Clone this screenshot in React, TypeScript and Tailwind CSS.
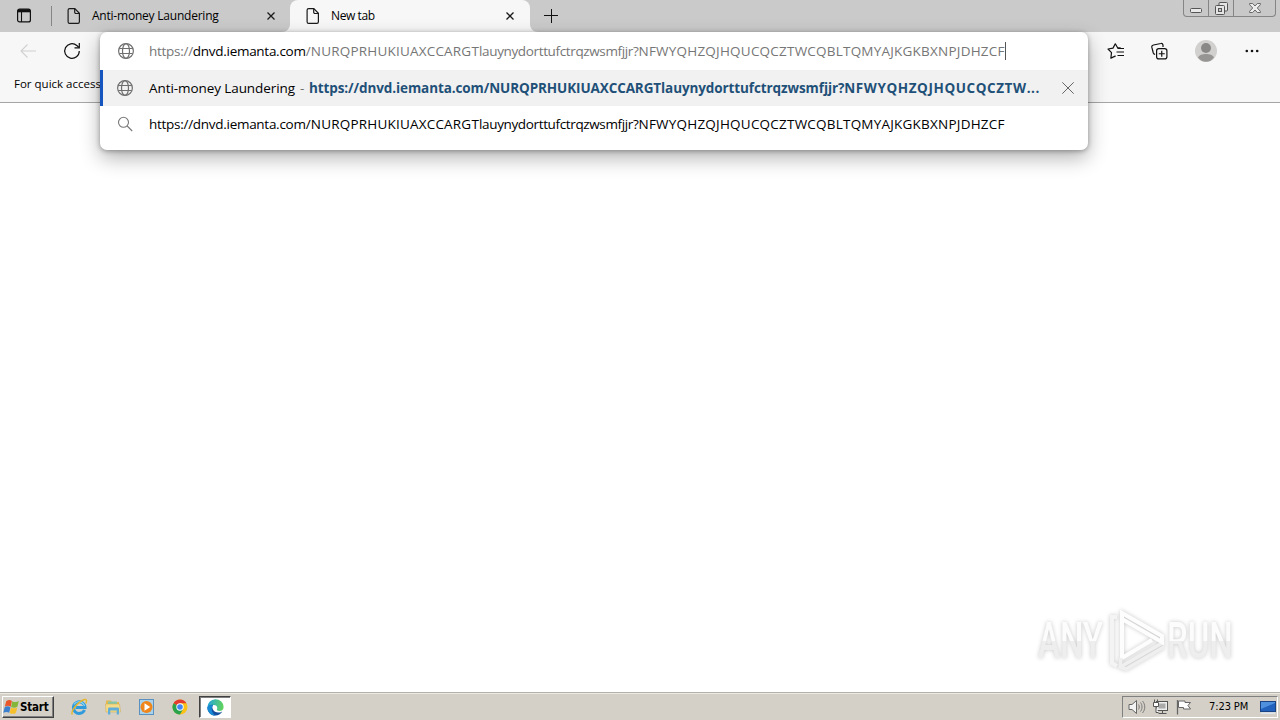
import React from "react";

interface IconProps {
  className?: string;
}

function PageIcon({ className }: IconProps) {
  return (
    <svg className={className} width="14" height="16" viewBox="0 0 14 16" fill="none" stroke="#1b1b1b" strokeWidth="1.2">
      <path d="M2.6.7h5.2l4.6 4.6v8.4c0 .9-.6 1.6-1.5 1.6H2.6c-.9 0-1.5-.7-1.5-1.6V2.3c0-.9.6-1.6 1.5-1.6z" />
      <path d="M7.7.8v3.4c0 .8.5 1.3 1.3 1.3h3.3" />
    </svg>
  );
}

function GlobeIcon({ className }: IconProps) {
  return (
    <svg className={className} width="16" height="16" viewBox="0 0 16 16" fill="none" stroke="#707070" strokeWidth="1.2">
      <circle cx="8" cy="8" r="7.4" />
      <ellipse cx="8" cy="8" rx="3.5" ry="7.4" />
      <path d="M1.3 5.5h13.4M1.3 10.5h13.4" />
    </svg>
  );
}

function CloseIcon({ className }: IconProps) {
  return (
    <svg className={className} width="8" height="8" viewBox="0 0 8 8" stroke="#1b1b1b" strokeWidth="1.3">
      <path d="M.5.5l7 7M7.5.5l-7 7" />
    </svg>
  );
}

function WindowButtons() {
  return (
    <div className="flex h-[17px] w-[93px] rounded-b-[4px] border border-t-0 border-[#858585] bg-[#c8c8c8]">
      <div className="flex w-[25px] justify-center border-r border-[#858585] pt-[8px]">
        <svg width="12" height="5" viewBox="0 0 12 5">
          <rect x=".5" y=".5" width="11" height="4" rx="1" fill="#e8e8e8" stroke="#555" />
        </svg>
      </div>
      <div className="flex w-[25px] justify-center border-r border-[#858585] pt-[2px]">
        <svg width="13" height="13" viewBox="0 0 13 13" fill="#e4e4e4" stroke="#555">
          <rect x="4" y=".5" width="8.5" height="8.5" rx="1" />
          <rect x=".5" y="3.5" width="9" height="9" rx="1" />
          <rect x="3.5" y="6.5" width="3" height="3" fill="#c8c8c8" />
        </svg>
      </div>
      <div className="flex flex-1 justify-center pt-[3px]">
        <svg width="12" height="10" viewBox="0 0 12 10">
          <path
            d="M.6.5h3L6 3l2.4-2.5h3v1.2L8.3 5l3.1 3.3v1.2h-3L6 7 3.6 9.5h-3V8.3L3.7 5 .6 1.7z"
            fill="#ececec"
            stroke="#5c5c5c"
            strokeWidth=".9"
          />
        </svg>
      </div>
    </div>
  );
}

function TabStrip() {
  return (
    <div className="flex h-8 bg-[#cacaca]">
      <div className="flex w-[290px] pt-2">
        <svg className="ml-[17px]" width="14" height="15" viewBox="0 0 14 15" fill="none" stroke="#111">
          <rect x=".6" y="1.1" width="12.8" height="12.8" rx="2" strokeWidth="1.2" />
          <path d="M1 2.8h12" strokeWidth="3" />
          <path d="M4.5 4v10" strokeWidth="1.1" />
        </svg>
        <div className="ml-5 -mt-[2px] h-[20px] w-px bg-[#858585]" />
        <PageIcon className="ml-[15px]" />
        <span className="ml-[11px] w-[128px] whitespace-nowrap text-[12px] leading-4 tracking-[-0.22px]">
          Anti-money Laundering
        </span>
        <CloseIcon className="ml-[47px] mt-[4px]" />
      </div>
      <div className="relative flex w-[240px] rounded-t-[8px] bg-[#f7f7f7] pt-2">
        <svg className="absolute -left-2 bottom-0" width="8" height="8" viewBox="0 0 8 8" fill="#f7f7f7">
          <path d="M8 0v8H0c4.5 0 8-3.5 8-8z" />
        </svg>
        <svg className="absolute -right-2 bottom-0" width="8" height="8" viewBox="0 0 8 8" fill="#f7f7f7">
          <path d="M0 0v8h8C3.5 8 0 4.5 0 0z" />
        </svg>
        <PageIcon className="ml-4" />
        <span className="ml-[11px] w-[100px] whitespace-nowrap text-[12px] leading-4 tracking-[-0.4px]">New tab</span>
        <CloseIcon className="ml-[75px] mt-[4px]" />
      </div>
      <svg className="ml-[14px] mt-[9px]" width="14" height="14" viewBox="0 0 14 14" stroke="#111" strokeWidth="1">
        <path d="M7.5 0v14M0 6.5h14" />
      </svg>
      <div className="ml-auto mr-[4px]">
        <WindowButtons />
      </div>
    </div>
  );
}

function Toolbar() {
  return (
    <div className="h-[71px] border-b border-[#a6a6a6] bg-[#f7f7f7]">
      <div className="flex h-[38px] items-center">
        <svg className="ml-5" width="16" height="14" viewBox="0 0 16 14" fill="none" stroke="#d0d0d0" strokeWidth="1.1">
          <path d="M16 7H1M7.5.5L1 7l6.5 6.5" />
        </svg>
        <svg className="ml-[27px]" width="18" height="18" viewBox="0 0 18 18" fill="none" stroke="#111" strokeWidth="1.2">
          <path d="M16.3 9a7.3 7.3 0 1 1-2.5-5.5l2 1.8" />
          <path d="M16.3 1v4.8h-4.8" />
        </svg>
        <div className="ml-auto mr-[21px] flex items-center">
          <svg width="18" height="17" viewBox="0 0 18 17" fill="none" stroke="#111" strokeWidth="1.2">
            <path
              d="M13.5 5.2l-2.9-.5L8.3.8 6 5.1l-5 .9 3.5 3.6-.6 5.5 4.3-2"
              strokeLinejoin="round"
              strokeLinecap="round"
            />
            <path d="M10.5 5.5H17M9.5 9H17M10.5 12.5H17" />
          </svg>
          <svg className="ml-[26px]" width="17" height="18" viewBox="0 0 17 18" fill="none" stroke="#111" strokeWidth="1.2">
            <path d="M12 5V3c-.3-1.2-1-1.8-2.2-1.5L2.5 3C1.2 3.3.6 4.1.8 5.2L2.3 11c.3.9.9 1.4 1.8 1.4" />
            <rect x="5.6" y="6.6" width="10.3" height="10.3" rx="2.2" />
            <path d="M10.75 8.8v6M7.75 11.75h6" />
          </svg>
          <svg className="ml-[27px]" width="22" height="22" viewBox="0 0 22 22">
            <circle cx="11" cy="11" r="11" fill="#d2d0ce" />
            <circle cx="11" cy="8" r="5" fill="#8a8886" />
            <path d="M3 17.5C4 15 7.5 14 11 14s7 1 8 3.5c-2 2.8-4.8 4.3-8 4.3S5 20.3 3 17.5z" fill="#979593" />
          </svg>
          <svg className="ml-[28px]" width="14" height="4" viewBox="0 0 14 4" fill="#111">
            <circle cx="1.8" cy="2" r="1.3" />
            <circle cx="7" cy="2" r="1.3" />
            <circle cx="12.2" cy="2" r="1.3" />
          </svg>
        </div>
      </div>
      <div className="pl-[14px] pt-[6px] text-[11.5px] leading-4">For quick access</div>
    </div>
  );
}

// the link is wider in its upper-case runs than in the lower-case one
function PageUrl() {
  return (
    <>
      https://<span className="text-black">dnvd.iemanta.com</span>
      <span className="tracking-[0.2px]">/NURQPRHUKIUAXCCARGT</span>
      <span className="tracking-[-0.36px]">lauynydorttufctrqzwsmfjjr?</span>
      <span className="tracking-[0.22px]">NFWYQHZQJHQUCQCZTWCQBLTQMYAJKGKBXNPJDHZCF</span>
    </>
  );
}

function AddressPopup() {
  return (
    <div className="absolute left-[100px] top-[32px] w-[988px] overflow-hidden whitespace-nowrap rounded-[7px] bg-white pb-2 text-[13.5px] shadow-[0_8px_20px_rgba(0,0,0,0.3),0_1px_5px_rgba(0,0,0,0.32)]">
      <div className="flex h-[38px] items-center pl-[18px]">
        <GlobeIcon />
        <span className="ml-[15px] w-[856px] tracking-[-0.28px] text-[#767676]">
          <PageUrl />
        </span>
        <span className="h-[18px] w-px bg-[#555]" />
      </div>
      <div className="flex h-9 items-center border-l-[3px] border-[#1455c0] bg-[#f1f1f1] pl-[14px]">
        <GlobeIcon />
        <span className="ml-4 w-[147px] tracking-[-0.08px]">Anti-money Laundering</span>
        <span className="w-[13px] pl-1 text-[#707070]">-</span>
        <span className="w-[740px] font-bold tracking-[-0.1px] text-[#1f5078]">
          https://dnvd.iemanta.com/NURQPRHUKIUAXCCARGTlauynydorttufctrqzwsmfjjr?
          <span className="tracking-[0.58px]">NFWYQHZQJHQUCQCZTW...</span>
        </span>
        <svg className="ml-[13px]" width="12" height="12" viewBox="0 0 12 12" stroke="#666">
          <path d="M.3.3l11.4 11.4M11.7.3L.3 11.7" />
        </svg>
      </div>
      <div className="flex h-9 items-center pl-[17px]">
        <svg width="16" height="16" viewBox="0 0 16 16" fill="none" stroke="#777" strokeWidth="1.1">
          <circle cx="6.5" cy="6.3" r="5" />
          <path d="M10.2 10l5 5" />
        </svg>
        <span className="ml-4 tracking-[-0.28px]">
          <PageUrl />
        </span>
      </div>
    </div>
  );
}

function Watermark() {
  return (
    <div className="absolute left-[1038px] top-[607px] flex h-[66px] w-[196px] items-center font-['Roboto',sans-serif] text-[50px] font-medium [filter:drop-shadow(0_0_2px_rgba(0,0,0,0.22))]">
      <span className="w-[69px] pt-[2px]">
        <span className="inline-block origin-left scale-x-[0.66] bg-linear-to-b from-[#fcfcfc] from-50% to-[#eeeeee] to-50% bg-clip-text text-transparent">
          ANY
        </span>
      </span>
      <svg width="60" height="66" viewBox="0 0 60 66" fill="none" strokeWidth="4">
        <path d="M15 59l42-24M14 51l-1 9 6 2 38-22" stroke="#efefef" strokeWidth="3.5" />
        <path d="M10 10H5v46l5 3" stroke="#f4f4f4" />
        <path d="M15 51V6l40 23v6L15 12M15 51l30-18" stroke="#fdfdfd" />
      </svg>
      <span className="w-[66px] pt-[2px]">
        <span className="inline-block origin-left scale-x-[0.66] bg-linear-to-b from-[#fcfcfc] from-50% to-[#eeeeee] to-50% bg-clip-text text-transparent">
          RUN
        </span>
      </span>
    </div>
  );
}

function StartFlag() {
  return (
    <svg className="-mt-px" width="17" height="16" viewBox="0 0 17 16">
      <path d="M3.2 2.2C5.2.7 7.2.8 8.9 1.9L7.7 7.7C5.8 6.6 4 6.5 1.8 7.7z" fill="#e8562a" />
      <path d="M9.3 2.2c2 1.1 4.2 1.2 6.5-.1l-1.4 5.7c-2.2 1.2-4.3 1.1-6.3.1z" fill="#83b63b" />
      <path d="M1.7 8.2c2-1.2 3.9-1.2 5.8 0L6.2 13.7C4.4 12.6 2.5 12.6.3 13.7z" fill="#3c7fce" />
      <path d="M8 8.4c2 1.1 4.1 1.2 6.3 0l-1.4 5.5c-2.3 1.2-4.3 1.1-6.3 0z" fill="#f6c02c" />
    </svg>
  );
}

function ExplorerIcon() {
  return (
    <svg width="18" height="18" viewBox="0 0 18 18" fill="none">
      <path d="M14.5 12A5.8 5.8 0 1 1 15 9.4H5.5" stroke="#2f9bdb" strokeWidth="3" />
      <path d="M14.5 8A5.9 5.9 0 0 0 4 6.3" stroke="#8bd6f6" strokeWidth="1.2" />
      <path d="M2.5 16.5C-.5 14.5 8 3.5 14.5 1.5c2.6-.5 2.2 2 1.3 4" stroke="#e6b62c" strokeWidth="1.4" />
    </svg>
  );
}

function FolderIcon() {
  return (
    <svg width="18" height="18" viewBox="0 0 18 18">
      <path d="M2 2.5h5l1 1.5h7v9H2z" fill="#e5b84e" />
      <path d="M4 3.5h9v3H4z" fill="#86c7a8" />
      <path d="M1.5 6h14l1 8H2z" fill="#f5db87" stroke="#cda94e" strokeWidth=".5" />
      <path d="M4 16.5V11c0-1 .5-1.5 1.5-1.5h8c1 0 1.500.5 1.500 1.500v5.500h-2.300v-4H6.300v4z" fill="#5fadd8" />
    </svg>
  );
}

function MediaIcon() {
  return (
    <svg width="18" height="18" viewBox="0 0 18 18">
      <rect x="1.5" y="1.5" width="14" height="15" fill="#a9d2ec" stroke="#5a91bf" />
      <circle cx="8.5" cy="9" r="6" fill="#ee861b" />
      <path d="M6.5 5.3v7.4L12.2 9z" fill="#fff" />
    </svg>
  );
}

function ChromeIcon() {
  return (
    <svg width="16" height="16" viewBox="0 0 16 16">
      <circle cx="8" cy="8" r="7.5" fill="#fbc116" />
      <path d="M8 8L1.5 4.2A7.5 7.5 0 0 1 14.5 4.25H8z" fill="#e33b2e" />
      <path d="M8 8L1.5 4.2A7.5 7.5 0 0 0 8 15.5L11.2 9.9z" fill="#2ba24c" />
      <circle cx="8" cy="8" r="3.7" fill="#fff" />
      <circle cx="8" cy="8" r="2.8" fill="#4285f4" />
    </svg>
  );
}

function EdgeIcon() {
  return (
    <svg width="17" height="17" viewBox="0 0 17 17">
      <defs>
        <linearGradient id="edgeTop" x1="0" x2="1" y1=".3" y2=".4">
          <stop offset="0" stopColor="#22a5de" />
          <stop offset="1" stopColor="#62d45b" />
        </linearGradient>
      </defs>
      <path
        d="M.4 8.5A8.1 8.1 0 0 1 16.6 8c0 2.5-1.8 3.9-4 3.9-2.2 0-3.2-.8-2.7-1.5 1.2-2.3-.5-4.4-3-4.4-3 0-5.5 1-6.5 2.5z"
        fill="url(#edgeTop)"
      />
      <path
        d="M.4 8.5C1.3 6.4 4 5.4 6.2 5.8 4 8 6 13.7 11.7 13.6c1.7 0 2.8-.5 3.6-1C13.7 15.3 11 16.7 8.2 16.6 3.8 16.5.4 13 .4 8.5z"
        fill="#124f9e"
      />
      <path d="M6.2 6.2C3.6 8.5 4.4 14 8.5 16.6 4 16.6.4 13 .4 8.5c1-2 3.5-2.7 5.8-2.3z" fill="#168bd5" />
    </svg>
  );
}

function Taskbar() {
  return (
    <div className="flex h-[26px] items-center bg-[#d4d0c8] font-['DejaVu_Sans_Condensed','DejaVu_Sans',sans-serif]">
      <div className="ml-[2px] flex h-[22px] w-[52px] items-center border border-b-[#404040] border-l-white border-r-[#404040] border-t-white shadow-[inset_-1px_-1px_0_#808080]">
        <StartFlag />
        <span className="pt-px text-[11.5px] font-bold tracking-[-0.2px]">Start</span>
      </div>
      <div className="ml-4 flex items-center gap-4">
        <ExplorerIcon />
        <FolderIcon />
        <MediaIcon />
        <ChromeIcon />
      </div>
      <div className="ml-[11px] flex h-[22px] w-[32px] items-center justify-center border border-b-white border-l-[#404040] border-r-white border-t-[#404040] bg-white shadow-[inset_1px_1px_0_#808080]">
        <EdgeIcon />
      </div>
      <div className="ml-auto mr-[2px] flex h-[22px] w-[156px] items-center border border-b-white border-l-[#808080] border-r-white border-t-[#808080]">
        <svg className="ml-[5px]" width="18" height="16" viewBox="0 0 18 16" stroke="#666" fill="none">
          <path d="M1 5.5h3L8.5 1.5v13L4 10.5H1z" fill="#f3f3f3" />
          <path d="M10.5 5.5c1 1.5 1 3.5 0 5M12.5 3.5c2 2.5 2 6.5 0 9M14.5 2c3 3.5 3 8.5 0 12" strokeWidth=".8" />
        </svg>
        <svg className="ml-[6px]" width="17" height="16" viewBox="0 0 17 16" stroke="#555">
          <rect x="4.5" y="2.5" width="11" height="9" fill="#eee" />
          <rect x="6.5" y="4.5" width="7" height="5" fill="#aaa" stroke="none" />
          <path d="M10.5 12v2M6.5 14.5h8" />
          <path d="M1.5 3.5h5v4h-5zM2.5 3V.5M5.5 3V.5M4 8v5.5h2.5" fill="#fff" />
        </svg>
        <svg className="ml-[7px]" width="16" height="16" viewBox="0 0 16 16" stroke="#666">
          <path d="M1.5 1v14.5" strokeWidth="1.3" />
          <path d="M2.5 2H9v1.5h5.5l-2.5 3 2.5 3.5h-7V8.500h-5z" fill="#fff" />
        </svg>
        <span className="ml-[17px] w-[41px] whitespace-nowrap pt-px text-[11px] tracking-[-0.1px]">7:23 PM</span>
        <svg className="ml-[10px]" width="16" height="15" viewBox="0 0 16 15">
          <rect x=".5" y="1.5" width="15" height="10" fill="#2262bd" stroke="#1a4383" />
          <path d="M1 2h14v1L1 9z" fill="#4f91df" />
          <path d="M1 12.5h14V14H1z" fill="#dce6ee" />
        </svg>
      </div>
    </div>
  );
}

export default function App() {
  return (
    <div className="relative flex h-[720px] w-[1280px] flex-col overflow-hidden bg-white font-['Open_Sans',sans-serif] text-black">
      <TabStrip />
      <Toolbar />
      <main className="flex-1" />
      <div className="h-[2px] border-t border-[#b5b2ac] bg-[#ece9e3]" />
      <Taskbar />
      <AddressPopup />
      <Watermark />
    </div>
  );
}
